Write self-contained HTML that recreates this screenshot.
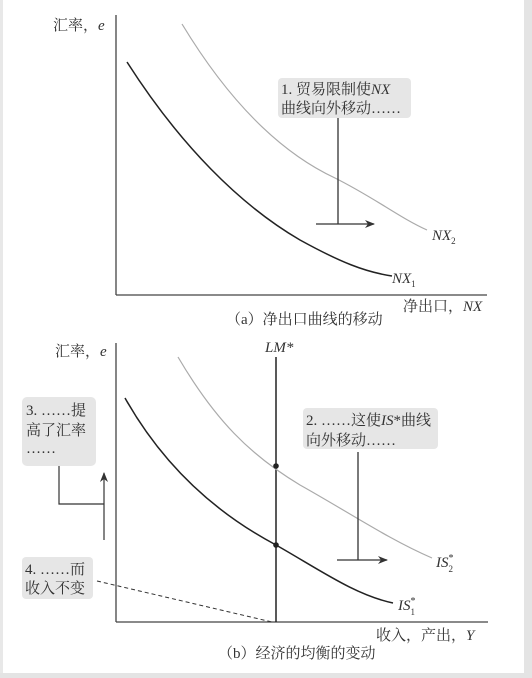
<!DOCTYPE html>
<html><head><meta charset="utf-8"><style>
html,body{margin:0;padding:0;background:#fff;}
svg{display:block;}
text{font-family:"Liberation Serif","Noto Serif CJK SC",serif;fill:#333;}
</style></head><body>
<svg width="532" height="678" viewBox="0 0 532 678" xmlns="http://www.w3.org/2000/svg">
<rect x="0" y="0" width="532" height="678" fill="#fff"/>
<rect x="0" y="0" width="3" height="678" fill="#e8e8e8"/>
<rect x="524" y="0" width="8" height="678" fill="#e4e4e4"/>
<rect x="0" y="673" width="532" height="5" fill="#e4e4e4"/>
<defs><marker id="ah" markerWidth="10" markerHeight="8" refX="9" refY="4" orient="auto" markerUnits="userSpaceOnUse"><path d="M0,0 L10,4 L0,8 L3,4 Z" fill="#333"/></marker></defs>

<!-- Panel a -->
<line x1="116" y1="15" x2="116" y2="295" stroke="#444" stroke-width="1.3"/>
<line x1="116" y1="295" x2="487" y2="295" stroke="#444" stroke-width="1.3"/>
<text x="53" y="30" font-size="15">汇率，<tspan font-style="italic">e</tspan></text>
<path d="M182,24 C225,95 275,150 335,178 C375,198 400,218 427,230" fill="none" stroke="#aaa" stroke-width="1.2"/>
<path d="M127,62 C180,145 240,205 300,240 C340,262 365,272 392,276" fill="none" stroke="#222" stroke-width="1.5"/>
<rect x="278" y="78" width="133" height="40" rx="4" fill="#e6e6e6"/>
<text x="281" y="94" font-size="15">1. 贸易限制使<tspan font-style="italic">NX</tspan></text>
<text x="281" y="113" font-size="15">曲线向外移动……</text>
<line x1="338" y1="118" x2="338" y2="224" stroke="#333" stroke-width="1.3"/>
<line x1="316" y1="224" x2="374" y2="224" stroke="#333" stroke-width="1.3" marker-end="url(#ah)"/>
<text x="432" y="240" font-size="15" font-style="italic">NX<tspan font-size="9" dy="4" font-style="normal">2</tspan></text>
<text x="392" y="283" font-size="15" font-style="italic">NX<tspan font-size="9" dy="4" font-style="normal">1</tspan></text>
<text x="403" y="311" font-size="15">净出口，<tspan font-style="italic">NX</tspan></text>
<text x="226" y="324" font-size="15">（a）净出口曲线的移动</text>

<!-- Panel b -->
<line x1="116" y1="343" x2="116" y2="622" stroke="#444" stroke-width="1.3"/>
<line x1="116" y1="622" x2="488" y2="622" stroke="#444" stroke-width="1.3"/>
<text x="55" y="356" font-size="15">汇率，<tspan font-style="italic">e</tspan></text>
<line x1="276" y1="357" x2="276" y2="622" stroke="#222" stroke-width="1.5"/>
<text x="265" y="352" font-size="15" font-style="italic">LM*</text>
<path d="M178,357 C215,420 250,455 300,485 C350,513 390,540 432,558" fill="none" stroke="#aaa" stroke-width="1.2"/>
<path d="M125,398 C160,460 210,510 276,545 C320,570 355,595 393,603" fill="none" stroke="#222" stroke-width="1.5"/>
<circle cx="276" cy="466" r="2.8" fill="#222"/>
<circle cx="276" cy="545" r="2.8" fill="#222"/>
<rect x="303" y="408" width="135" height="41" rx="4" fill="#e6e6e6"/>
<text x="306" y="425" font-size="15">2. ……这使<tspan font-style="italic">IS</tspan>*曲线</text>
<text x="306" y="445" font-size="15">向外移动……</text>
<line x1="358" y1="452" x2="358" y2="560" stroke="#333" stroke-width="1.3"/>
<line x1="337" y1="560" x2="387" y2="560" stroke="#333" stroke-width="1.3" marker-end="url(#ah)"/>
<text x="436" y="567" font-size="15" font-style="italic">IS<tspan font-size="10" dy="-6" font-style="normal">*</tspan><tspan font-size="9" dx="-5" dy="11" font-style="normal">2</tspan></text>
<text x="398" y="610" font-size="15" font-style="italic">IS<tspan font-size="10" dy="-6" font-style="normal">*</tspan><tspan font-size="9" dx="-5" dy="11" font-style="normal">1</tspan></text>
<rect x="22" y="397" width="74" height="69" rx="5" fill="#e6e6e6"/>
<text x="26" y="415" font-size="15">3. ……提</text>
<text x="26" y="435" font-size="15">高了汇率</text>
<text x="26" y="453" font-size="15">……</text>
<polyline points="59,466 59,504 104,504" fill="none" stroke="#333" stroke-width="1.2"/>
<line x1="104" y1="540" x2="104" y2="473" stroke="#333" stroke-width="1.2" marker-end="url(#ah)"/>
<rect x="22" y="557" width="71" height="42" rx="4" fill="#e6e6e6"/>
<text x="25" y="574" font-size="15">4. ……而</text>
<text x="25" y="593" font-size="15">收入不变</text>
<line x1="97" y1="581" x2="272" y2="622" stroke="#333" stroke-width="1" stroke-dasharray="4,3"/>
<text x="376" y="640" font-size="15">收入，产出，<tspan font-style="italic">Y</tspan></text>
<text x="218" y="658" font-size="15">（b）经济的均衡的变动</text>
</svg>
</body></html>
